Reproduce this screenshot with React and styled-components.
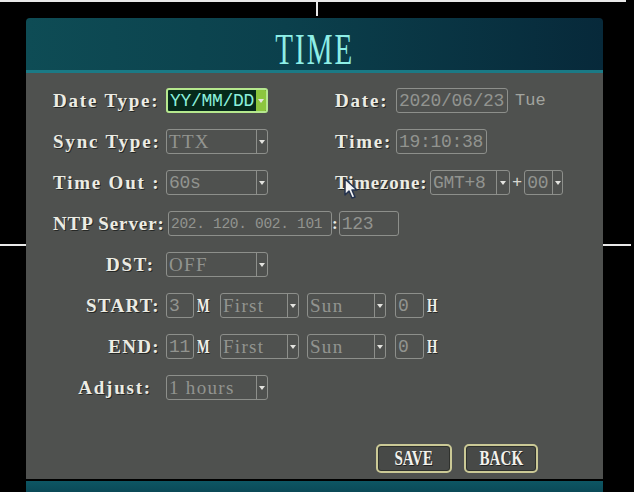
import React from 'react';
import styled, { createGlobalStyle } from 'styled-components';

const Global = createGlobalStyle`
  html, body { margin: 0; padding: 0; background: #000; }
  body { width: 634px; height: 492px; overflow: hidden; }
`;

const Screen = styled.div`
  position: relative;
  width: 634px;
  height: 492px;
  box-sizing: border-box;
  padding: 18px 31px 0 26px;
  background: #000;
  overflow: hidden;
`;

const GuideH = styled.div`
  position: absolute;
  top: ${p => p.$top}px;
  left: ${p => p.$left}px;
  width: ${p => p.$w}px;
  height: 2px;
  background: #e8e8e8;
`;

const GuideV = styled.div`
  position: absolute;
  top: 0;
  left: ${p => p.$left}px;
  width: 2px;
  height: ${p => p.$h}px;
  background: #e8e8e8;
`;

const Panel = styled.div`
  width: 577px;
  display: flex;
  flex-direction: column;
`;

const Header = styled.div`
  height: 55px;
  box-sizing: border-box;
  padding-top: 10px;
  border-radius: 4px 4px 0 0;
  background: linear-gradient(90deg, #0e4c55 0%, #0b404c 45%, #07293a 100%);
  border-bottom: 3px solid #1b7a86;
  display: flex;
  align-items: flex-start;
  justify-content: center;
`;

const Title = styled.span`
  display: inline-block;
  font-family: "Liberation Serif", serif;
  font-size: 44px;
  line-height: 1;
  letter-spacing: 3px;
  color: #8eeee6;
  transform: scaleX(0.66);
`;

const Body = styled.div`
  height: 406px;
  box-sizing: border-box;
  background: #4f514f;
  padding: 15px 0 6px 27px;
  display: flex;
  flex-direction: column;
`;

const Form = styled.div`
  display: flex;
  flex-direction: column;
  gap: 16px;
`;

const Row = styled.div`
  display: flex;
  align-items: center;
  height: 25px;
`;

const Half = styled.div`
  display: flex;
  align-items: center;
  width: ${p => p.$w}px;
`;

const Label = styled.span`
  width: ${p => p.$w || 113}px;
  box-sizing: border-box;
  padding-right: ${p => p.$pr || 0}px;
  text-align: ${p => p.$align || 'right'};
  font-family: "Liberation Serif", serif;
  font-weight: bold;
  font-size: 19px;
  letter-spacing: ${p => p.$ls ?? 1.8}px;
  color: #ecece4;
  text-shadow: 1px 1px 0 #262826;
  white-space: nowrap;
  flex-shrink: 0;
`;

const Unit = styled.span`
  display: inline-block;
  width: 12px;
  margin-left: ${p => p.$ml || 0}px;
  font-family: "Liberation Serif", serif;
  font-weight: bold;
  font-size: 19px;
  color: #f0f0ea;
  text-shadow: 1px 1px 0 #262826;
  transform: scaleX(0.7);
  transform-origin: left center;
`;

const Box = styled.div`
  display: flex;
  align-items: stretch;
  width: ${p => p.$w}px;
  height: 25px;
  margin-left: ${p => p.$ml || 0}px;
  box-sizing: border-box;
  border: ${p => (p.$active ? '2px solid #b6e88e' : '1px solid #8d8f8b')};
  border-radius: 3px;
  background: ${p => (p.$active ? '#05291b' : 'transparent')};
  overflow: hidden;
  flex-shrink: 0;
`;

const Value = styled.span`
  flex: 1;
  display: flex;
  align-items: center;
  padding-left: 2px;
  font-family: ${p => (p.$serif ? '"Liberation Serif", serif' : '"Liberation Mono", monospace')};
  font-size: ${p => p.$fs || (p.$serif ? 19 : 18)}px;
  letter-spacing: ${p => (p.$serif ? '1.3px' : '-0.3px')};
  color: ${p => (p.$active ? '#8cf0dc' : '#92948f')};
  white-space: nowrap;
  overflow: hidden;
`;

const ArrowPart = styled.span`
  width: ${p => p.$w || 10}px;
  flex-shrink: 0;
  display: flex;
  align-items: center;
  justify-content: center;
  border-left: ${p => (p.$active ? 'none' : '1px solid #8d8f8b')};
  background: ${p => (p.$active ? '#8cc63e' : 'transparent')};
  &::after {
    content: '';
    border-left: 3px solid transparent;
    border-right: 3px solid transparent;
    border-top: 4px solid #e4e4e0;
  }
`;

const Extra = styled.span`
  margin-left: ${p => p.$ml || 0}px;
  font-family: ${p => (p.$serif ? '"Liberation Serif", serif' : '"Liberation Mono", monospace')};
  font-size: 17px;
  color: ${p => p.$color || '#a2a49f'};
  font-weight: ${p => (p.$bold ? 'bold' : 'normal')};
`;

const Footer = styled.div`
  margin-top: auto;
  display: flex;
  justify-content: flex-end;
  gap: 12px;
  padding-right: 65px;
`;

const Btn = styled.div`
  width: ${p => p.$w}px;
  height: 29px;
  box-sizing: border-box;
  border: 2px solid #cbc996;
  border-radius: 5px;
  background: #474947;
  box-shadow: inset 0 0 0 1px #2f312d;
  display: flex;
  align-items: center;
  justify-content: center;
`;

const BtnText = styled.span`
  display: inline-block;
  font-family: "Liberation Serif", serif;
  font-weight: bold;
  font-size: 21px;
  color: #f2f2ec;
  text-shadow: 1px 1px 0 #222;
  transform: scaleX(0.72);
`;

const BottomStrip = styled.div`
  margin-top: 2px;
  height: 14px;
  background: linear-gradient(180deg, #0d5663, #0a4654);
`;

const Cursor = styled.svg`
  position: absolute;
  left: 344px;
  top: 178px;
`;

const Select = ({ w, v, active, ml, aw, fs, serif }) => (
  <Box $w={w} $active={active} $ml={ml}>
    <Value $active={active} $fs={fs} $serif={serif}>{v}</Value>
    <ArrowPart $active={active} $w={aw} />
  </Box>
);

const Field = ({ w, v, ml, fs }) => (
  <Box $w={w} $ml={ml}>
    <Value $fs={fs}>{v}</Value>
  </Box>
);

const DstRow = ({ label, m }) => (
  <Row>
    <Label $pr={6} $ls={1.3}>{label}</Label>
    <Field w={28} v={m} />
    <Unit $ml={3}>M</Unit>
    <Select w={79} v="First" ml={11} serif />
    <Select w={79} v="Sun" ml={8} serif />
    <Field w={29} v="0" ml={9} />
    <Unit $ml={3}>H</Unit>
  </Row>
);

export default function App() {
  return (
    <>
      <Global />
      <Screen>
        <Panel>
          <Header>
            <Title>TIME</Title>
          </Header>
          <Body>
            <Form>
              <Row>
                <Half $w={282}>
                  <Label $align="left">Date Type:</Label>
                  <Select w={102} v="YY/MM/DD" active />
                </Half>
                <Label $w={61} $align="left">Date:</Label>
                <Field w={112} v="2020/06/23" />
                <Extra $ml={7}>Tue</Extra>
              </Row>
              <Row>
                <Half $w={282}>
                  <Label $align="left">Sync Type:</Label>
                  <Select w={102} v="TTX" serif />
                </Half>
                <Label $w={61} $align="left">Time:</Label>
                <Field w={91} v="19:10:38" />
              </Row>
              <Row>
                <Half $w={282}>
                  <Label $align="left">Time Out :</Label>
                  <Select w={102} v="60s" />
                </Half>
                <Label $w={95} $align="left" $ls={0.8}>Timezone:</Label>
                <Select w={80} v="GMT+8" aw={12} />
                <Extra $ml={2} $color="#d8d8d2">+</Extra>
                <Select w={39} v="00" ml={2} aw={9} />
              </Row>
              <Row>
                <Label $w={115} $align="left" $ls={0.9}>NTP Server:</Label>
                <Field w={164} v="202. 120. 002. 101" fs={14.5} />
                <Extra $color="#ecece4" $bold $serif>:</Extra>
                <Field w={60} v="123" ml={1} />
              </Row>
              <Row>
                <Label $pr={11}>DST:</Label>
                <Select w={102} v="OFF" serif />
              </Row>
              <DstRow label="START:" m="3" />
              <DstRow label="END:" m="11" />
              <Row>
                <Label $pr={14}>Adjust:</Label>
                <Select w={102} v="1 hours" serif />
              </Row>
            </Form>
            <Footer>
              <Btn $w={76}><BtnText>SAVE</BtnText></Btn>
              <Btn $w={74}><BtnText>BACK</BtnText></Btn>
            </Footer>
          </Body>
          <BottomStrip />
        </Panel>
        <GuideH $top={0} $left={0} $w={626} />
        <GuideV $left={316} $h={16} />
        <GuideH $top={244} $left={0} $w={26} />
        <GuideH $top={244} $left={603} $w={28} />
        <Cursor width="16" height="22" viewBox="0 0 16 22">
          <path d="M1 1 L1 17 L5 13 L8 20 L11 19 L8 12 L13 12 Z" fill="#f4f4f4" stroke="#24324e" strokeWidth="1.5" strokeLinejoin="round" />
        </Cursor>
      </Screen>
    </>
  );
}
